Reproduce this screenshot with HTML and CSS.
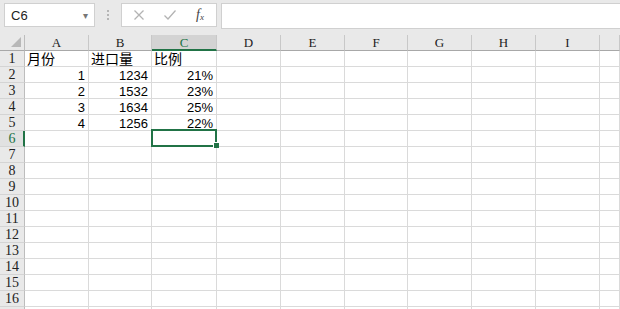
FILE: index.html
```html
<!DOCTYPE html>
<html lang="zh-CN">
<head>
    <meta charset="utf-8">
    <title>工作簿1 - Excel</title>
    <link rel="stylesheet" href="styles.css">
</head>
<body>
    <div class="formula-bar">
        <div class="name-box">
            <span>C6</span>
            <span class="drop">&#9662;</span>
        </div>
        <div class="grip"><i></i><i></i><i></i></div>
        <div class="fx-buttons">
            <svg class="btn-icon" width="12" height="12" viewBox="0 0 12 12">
                <path d="M1.5 1.5 L10.5 10.5 M10.5 1.5 L1.5 10.5" stroke="#b3b3b3" stroke-width="1.3" fill="none"/>
            </svg>
            <svg class="btn-icon" width="14" height="12" viewBox="0 0 14 12">
                <path d="M1.5 6.5 L5 10 L12.5 1.5" stroke="#b3b3b3" stroke-width="1.3" fill="none"/>
            </svg>
            <span class="fx"><i>f</i><sub>x</sub></span>
        </div>
        <div class="formula-input"></div>
    </div>

    <div class="sheet">
        <div class="row head">
            <div class="rh corner"><span class="tri"></span></div>
            <div class="ch">A</div>
            <div class="ch">B</div>
            <div class="ch active">C</div>
            <div class="ch">D</div>
            <div class="ch">E</div>
            <div class="ch">F</div>
            <div class="ch">G</div>
            <div class="ch">H</div>
            <div class="ch">I</div>
            <div class="ch"></div>
        </div>

        <div class="row">
            <div class="rh">1</div>
            <div class="c cjk">月份</div>
            <div class="c cjk">进口量</div>
            <div class="c cjk">比例</div>
            <div class="c"></div><div class="c"></div><div class="c"></div><div class="c"></div><div class="c"></div><div class="c"></div><div class="c"></div>
        </div>
        <div class="row">
            <div class="rh">2</div>
            <div class="c num">1</div>
            <div class="c num">1234</div>
            <div class="c num">21%</div>
            <div class="c"></div><div class="c"></div><div class="c"></div><div class="c"></div><div class="c"></div><div class="c"></div><div class="c"></div>
        </div>
        <div class="row">
            <div class="rh">3</div>
            <div class="c num">2</div>
            <div class="c num">1532</div>
            <div class="c num">23%</div>
            <div class="c"></div><div class="c"></div><div class="c"></div><div class="c"></div><div class="c"></div><div class="c"></div><div class="c"></div>
        </div>
        <div class="row">
            <div class="rh">4</div>
            <div class="c num">3</div>
            <div class="c num">1634</div>
            <div class="c num">25%</div>
            <div class="c"></div><div class="c"></div><div class="c"></div><div class="c"></div><div class="c"></div><div class="c"></div><div class="c"></div>
        </div>
        <div class="row">
            <div class="rh">5</div>
            <div class="c num">4</div>
            <div class="c num">1256</div>
            <div class="c num">22%</div>
            <div class="c"></div><div class="c"></div><div class="c"></div><div class="c"></div><div class="c"></div><div class="c"></div><div class="c"></div>
        </div>
        <div class="row">
            <div class="rh active">6</div>
            <div class="c"></div>
            <div class="c"></div>
            <div class="c selected"><span class="sel-box"></span><span class="handle"></span></div>
            <div class="c"></div><div class="c"></div><div class="c"></div><div class="c"></div><div class="c"></div><div class="c"></div><div class="c"></div>
        </div>
        <div class="row"><div class="rh">7</div><div class="c"></div><div class="c"></div><div class="c"></div><div class="c"></div><div class="c"></div><div class="c"></div><div class="c"></div><div class="c"></div><div class="c"></div><div class="c"></div></div>
        <div class="row"><div class="rh">8</div><div class="c"></div><div class="c"></div><div class="c"></div><div class="c"></div><div class="c"></div><div class="c"></div><div class="c"></div><div class="c"></div><div class="c"></div><div class="c"></div></div>
        <div class="row"><div class="rh">9</div><div class="c"></div><div class="c"></div><div class="c"></div><div class="c"></div><div class="c"></div><div class="c"></div><div class="c"></div><div class="c"></div><div class="c"></div><div class="c"></div></div>
        <div class="row"><div class="rh">10</div><div class="c"></div><div class="c"></div><div class="c"></div><div class="c"></div><div class="c"></div><div class="c"></div><div class="c"></div><div class="c"></div><div class="c"></div><div class="c"></div></div>
        <div class="row"><div class="rh">11</div><div class="c"></div><div class="c"></div><div class="c"></div><div class="c"></div><div class="c"></div><div class="c"></div><div class="c"></div><div class="c"></div><div class="c"></div><div class="c"></div></div>
        <div class="row"><div class="rh">12</div><div class="c"></div><div class="c"></div><div class="c"></div><div class="c"></div><div class="c"></div><div class="c"></div><div class="c"></div><div class="c"></div><div class="c"></div><div class="c"></div></div>
        <div class="row"><div class="rh">13</div><div class="c"></div><div class="c"></div><div class="c"></div><div class="c"></div><div class="c"></div><div class="c"></div><div class="c"></div><div class="c"></div><div class="c"></div><div class="c"></div></div>
        <div class="row"><div class="rh">14</div><div class="c"></div><div class="c"></div><div class="c"></div><div class="c"></div><div class="c"></div><div class="c"></div><div class="c"></div><div class="c"></div><div class="c"></div><div class="c"></div></div>
        <div class="row"><div class="rh">15</div><div class="c"></div><div class="c"></div><div class="c"></div><div class="c"></div><div class="c"></div><div class="c"></div><div class="c"></div><div class="c"></div><div class="c"></div><div class="c"></div></div>
        <div class="row"><div class="rh">16</div><div class="c"></div><div class="c"></div><div class="c"></div><div class="c"></div><div class="c"></div><div class="c"></div><div class="c"></div><div class="c"></div><div class="c"></div><div class="c"></div></div>
        <div class="row"><div class="rh"></div><div class="c"></div><div class="c"></div><div class="c"></div><div class="c"></div><div class="c"></div><div class="c"></div><div class="c"></div><div class="c"></div><div class="c"></div><div class="c"></div></div>
    </div>
</body>
</html>
```

FILE: styles.css
```css
body {
    margin: 0;
    width: 620px;
    height: 309px;
    overflow: hidden;
    background-color: #fff;
    font-family: "Liberation Sans", "Noto Sans CJK SC", sans-serif;
    color: #000;
}

/* formula bar */
.formula-bar {
    display: flex;
    align-items: flex-start;
    height: 35px;
    padding: 3px 0 0 4px;
    box-sizing: border-box;
    background-color: #e9e9e9;
}

.name-box {
    display: flex;
    align-items: center;
    justify-content: space-between;
    width: 91px;
    height: 24px;
    box-sizing: border-box;
    padding: 0 6px 0 6px;
    background-color: #fff;
    border: 1px solid #d0d0d0;
    font-size: 13px;
    color: #222;
}

.name-box .drop {
    font-size: 10px;
    color: #777;
}

.grip {
    display: flex;
    flex-direction: column;
    gap: 2px;
    width: 26px;
    height: 24px;
    align-items: center;
    justify-content: center;
}

.grip i {
    width: 2px;
    height: 2px;
    background-color: #b5b5b5;
}

.fx-buttons {
    display: flex;
    align-items: center;
    width: 96px;
    height: 24px;
    box-sizing: border-box;
    padding-left: 11px;
    background-color: #fff;
    border: 1px solid #d0d0d0;
}

.btn-icon {
    margin-right: 18px;
}

.fx {
    font-family: "Liberation Serif", serif;
    font-size: 14px;
    color: #444;
    margin-left: 1px;
}

.fx sub {
    font-size: 9px;
    font-style: italic;
    vertical-align: -1px;
}

.formula-input {
    flex: 1;
    height: 24px;
    margin-left: 4px;
    background-color: #fff;
    border: 1px solid #d0d0d0;
    border-right: none;
}

/* sheet grid */
.row {
    display: grid;
    grid-template-columns: 25px 64px 63px 65px 64px 64px 63px 64px 64px 64px 20px;
    height: 16px;
}

.rh, .ch, .c {
    box-sizing: border-box;
    height: 16px;
    overflow: hidden;
    white-space: nowrap;
}

.rh {
    background-color: #e9e9e9;
    border-right: 1px solid #bdbdbd;
    border-bottom: 1px solid #d4d4d4;
    text-align: center;
    font-family: "Liberation Serif", serif;
    font-size: 14px;
    line-height: 16px;
    color: #222;
}

.rh.active {
    color: #217346;
    background-color: #e1e1e1;
    border-right: 2px solid #217346;
    padding-left: 1px;
}

.head .ch {
    background-color: #e9e9e9;
    border-right: 1px solid #c8c8c8;
    border-bottom: 1px solid #a8a8a8;
    text-align: center;
    font-family: "Liberation Serif", serif;
    font-size: 13px;
    line-height: 16px;
    color: #222;
}

.head .ch.active {
    background-color: #d3d3d3;
    border-bottom: 2px solid #217346;
    color: #217346;
}

.corner {
    position: relative;
    border-bottom: 1px solid #a8a8a8;
}

.tri {
    position: absolute;
    right: 3px;
    bottom: 3px;
    width: 0;
    height: 0;
    border-left: 10px solid transparent;
    border-bottom: 10px solid #b8b8b8;
}

.c {
    border-right: 1px solid #dadada;
    border-bottom: 1px solid #dadada;
    font-size: 13px;
    line-height: 15px;
    padding: 1px 3px 0 3px;
}

.cjk {
    font-size: 14px;
    line-height: 15px;
    padding-left: 2px;
}

.num {
    text-align: right;
}

.selected {
    position: relative;
    overflow: visible;
}

.sel-box {
    position: absolute;
    left: -1px;
    top: -2px;
    width: 66px;
    height: 18px;
    box-sizing: border-box;
    border: 2px solid #217346;
}

.handle {
    position: absolute;
    right: -3px;
    bottom: -2px;
    width: 5px;
    height: 5px;
    background-color: #217346;
    border-left: 1px solid #fff;
    border-top: 1px solid #fff;
}
```
